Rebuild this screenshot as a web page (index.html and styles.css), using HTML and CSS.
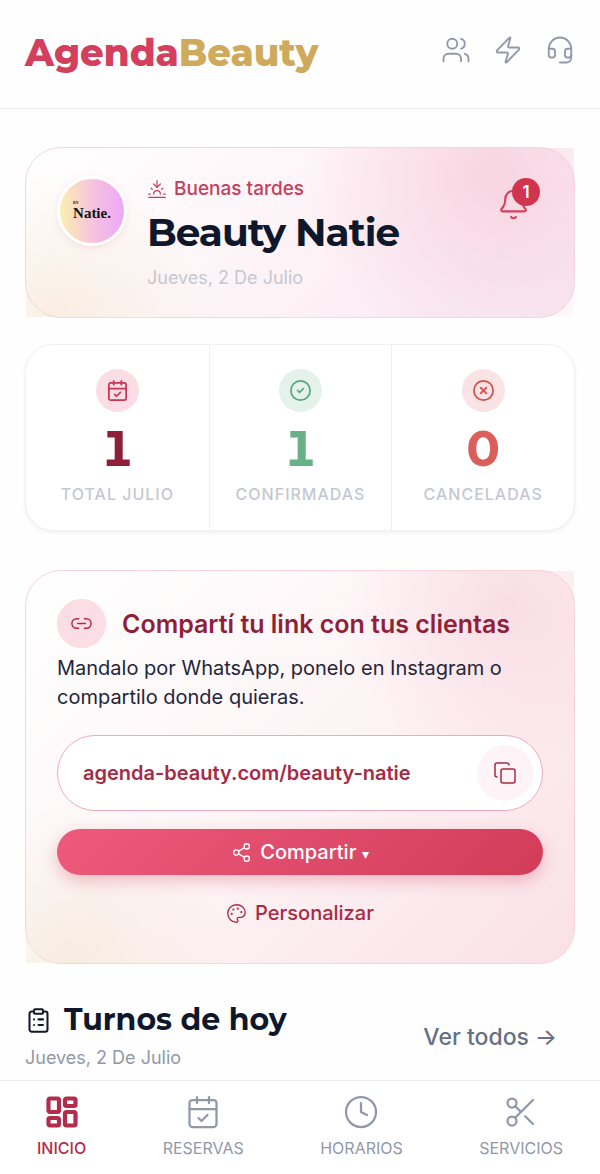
FILE: index.html
```html
<!DOCTYPE html>
<html lang="es">
<head>
    <meta charset="UTF-8">
    <meta name="viewport" content="width=device-width, initial-scale=1.0">
    <title>Inicio - AgendaBeauty</title>
    <link rel="stylesheet" href="styles.css">
</head>
<body>
    <header class="topbar">
        <a class="brand" href="#">Agenda<span>Beauty</span></a>
        <div class="topbar-actions">
            <button type="button" aria-label="Clientas">
                <svg class="icon" viewBox="0 0 24 24"><path d="M16 21v-2a4 4 0 0 0-4-4H6a4 4 0 0 0-4 4v2"/><circle cx="9" cy="7" r="4"/><path d="M22 21v-2a4 4 0 0 0-3-3.87"/><path d="M16 3.13a4 4 0 0 1 0 7.75"/></svg>
            </button>
            <button type="button" aria-label="Novedades">
                <svg class="icon" viewBox="0 0 24 24"><path d="M4 14a1 1 0 0 1-.78-1.63l9.9-10.2a.5.5 0 0 1 .86.46l-1.92 6.02A1 1 0 0 0 13 10h7a1 1 0 0 1 .78 1.63l-9.9 10.2a.5.5 0 0 1-.86-.46l1.92-6.02A1 1 0 0 0 11 14z"/></svg>
            </button>
            <button type="button" aria-label="Soporte">
                <svg class="icon" viewBox="0 0 24 24"><path d="M3 11h3a2 2 0 0 1 2 2v3a2 2 0 0 1-2 2H5a2 2 0 0 1-2-2v-5Zm0 0a9 9 0 1 1 18 0m0 0v5a2 2 0 0 1-2 2h-1a2 2 0 0 1-2-2v-3a2 2 0 0 1 2-2h3Z"/><path d="M21 16v2a4 4 0 0 1-4 4h-5"/></svg>
            </button>
        </div>
    </header>

    <main>
        <section class="card hero">
            <div class="avatar"><small>BY</small><span>Natie.</span></div>
            <div class="hero-text">
                <p class="greeting">
                    <svg class="icon" viewBox="0 0 24 24"><path d="M12 10V2"/><path d="m4.93 10.93 1.41 1.41"/><path d="M2 18h2"/><path d="M20 18h2"/><path d="m19.07 10.93-1.41 1.41"/><path d="M22 22H2"/><path d="m16 6-4 4-4-4"/><path d="M16 18a4 4 0 0 0-8 0"/></svg>
                    Buenas tardes
                </p>
                <h1>Beauty Natie</h1>
                <p class="date">Jueves, 2 De Julio</p>
            </div>
            <button class="bell" type="button" aria-label="Notificaciones">
                <svg class="icon" viewBox="0 0 24 24"><path d="M10.268 21a2 2 0 0 0 3.464 0"/><path d="M3.262 15.326A1 1 0 0 0 4 17h16a1 1 0 0 0 .74-1.673C19.41 13.956 18 12.499 18 8A6 6 0 0 0 6 8c0 4.499-1.411 5.956-2.738 7.326"/></svg>
                <span class="badge">1</span>
            </button>
        </section>

        <section class="stats">
            <div class="stat total">
                <div class="stat-icon">
                    <svg class="icon" viewBox="0 0 24 24"><path d="M8 2v4"/><path d="M16 2v4"/><rect width="18" height="18" x="3" y="4" rx="2"/><path d="M3 10h18"/><path d="m9 16 2 2 4-4"/></svg>
                </div>
                <strong>1</strong>
                <span>Total Julio</span>
            </div>
            <div class="stat confirmed">
                <div class="stat-icon">
                    <svg class="icon" viewBox="0 0 24 24"><circle cx="12" cy="12" r="10"/><path d="m9 12 2 2 4-4"/></svg>
                </div>
                <strong>1</strong>
                <span>Confirmadas</span>
            </div>
            <div class="stat canceled">
                <div class="stat-icon">
                    <svg class="icon" viewBox="0 0 24 24"><circle cx="12" cy="12" r="10"/><path d="m15 9-6 6"/><path d="m9 9 6 6"/></svg>
                </div>
                <strong>0</strong>
                <span>Canceladas</span>
            </div>
        </section>

        <section class="card share">
            <div class="share-title">
                <div class="link-icon">
                    <svg class="icon" viewBox="0 0 24 24"><path d="M9 17H7A5 5 0 0 1 7 7h2"/><path d="M15 7h2a5 5 0 1 1 0 10h-2"/><path d="M8 12h8"/></svg>
                </div>
                <h2>Compartí tu link con tus clientas</h2>
            </div>
            <p class="share-text">Mandalo por WhatsApp, ponelo en Instagram o compartilo donde quieras.</p>
            <div class="link-box">
                <a href="#">agenda-beauty.com/beauty-natie</a>
                <button type="button" aria-label="Copiar link">
                    <svg class="icon" viewBox="0 0 24 24"><rect width="14" height="14" x="8" y="8" rx="2"/><path d="M4 16c-1.1 0-2-.9-2-2V4c0-1.1.9-2 2-2h10c1.1 0 2 .9 2 2"/></svg>
                </button>
            </div>
            <button class="btn-share" type="button">
                <svg class="icon" viewBox="0 0 24 24"><circle cx="18" cy="5" r="3"/><circle cx="6" cy="12" r="3"/><circle cx="18" cy="19" r="3"/><path d="m8.59 13.51 6.83 3.98"/><path d="m15.41 6.51-6.82 3.98"/></svg>
                <span>Compartir <small>▾</small></span>
            </button>
            <button class="btn-custom" type="button">
                <svg class="icon" viewBox="0 0 24 24"><circle cx="13.5" cy="6.5" r=".5"/><circle cx="17.5" cy="10.5" r=".5"/><circle cx="8.5" cy="7.5" r=".5"/><circle cx="6.5" cy="12.5" r=".5"/><path d="M12 2C6.5 2 2 6.5 2 12s4.5 10 10 10c.926 0 1.648-.746 1.648-1.688 0-.437-.18-.835-.437-1.125-.29-.289-.438-.652-.438-1.125a1.64 1.64 0 0 1 1.668-1.668h1.996c3.051 0 5.555-2.503 5.555-5.554C21.965 6.012 17.461 2 12 2z"/></svg>
                Personalizar
            </button>
        </section>

        <section class="today">
            <div>
                <h2>
                    <svg class="icon" viewBox="0 0 24 24"><rect width="8" height="4" x="8" y="2" rx="1"/><path d="M16 4h2a2 2 0 0 1 2 2v14a2 2 0 0 1-2 2H6a2 2 0 0 1-2-2V6a2 2 0 0 1 2-2h2"/><path d="M12 11h4"/><path d="M12 16h4"/><path d="M8 11h.01"/><path d="M8 16h.01"/></svg>
                    Turnos de hoy
                </h2>
                <p>Jueves, 2 De Julio</p>
            </div>
            <a href="#">Ver todos →</a>
        </section>
    </main>

    <nav class="bottom-nav">
        <a class="active" href="#">
            <svg class="icon" viewBox="0 0 24 24"><rect width="7" height="9" x="3" y="3" rx="1"/><rect width="7" height="5" x="14" y="3" rx="1"/><rect width="7" height="9" x="14" y="12" rx="1"/><rect width="7" height="5" x="3" y="16" rx="1"/></svg>
            Inicio
        </a>
        <a href="#">
            <svg class="icon" viewBox="0 0 24 24"><path d="M8 2v4"/><path d="M16 2v4"/><rect width="18" height="18" x="3" y="4" rx="2"/><path d="M3 10h18"/><path d="m9 16 2 2 4-4"/></svg>
            Reservas
        </a>
        <a href="#">
            <svg class="icon" viewBox="0 0 24 24"><circle cx="12" cy="12" r="10"/><path d="M12 6v6l4 2"/></svg>
            Horarios
        </a>
        <a href="#">
            <svg class="icon" viewBox="0 0 24 24"><circle cx="6" cy="6" r="3"/><path d="M8.12 8.12 12 12"/><path d="M20 4 8.12 15.88"/><circle cx="6" cy="18" r="3"/><path d="M14.8 14.8 20 20"/></svg>
            Servicios
        </a>
    </nav>
</body>
</html>
```

FILE: styles.css
```css
* {
    box-sizing: border-box;
    margin: 0;
    padding: 0;
}
body {
    min-height: 100vh;
    display: flex;
    flex-direction: column;
    background: #fefefe;
    color: #0f172a;
    font-family: Inter, "Liberation Sans", sans-serif;
    font-size: 20px;
}
button {
    background: none;
    border: none;
    font: inherit;
    color: inherit;
    cursor: pointer;
}
a {
    color: inherit;
    text-decoration: none;
}
.icon {
    display: block;
    flex-shrink: 0;
    width: 20px;
    height: 20px;
    fill: none;
    stroke: currentColor;
    stroke-width: 1.5;
    stroke-linecap: round;
    stroke-linejoin: round;
}

/* Header */
.topbar {
    display: flex;
    align-items: center;
    justify-content: space-between;
    height: 109px;
    padding: 0 25px 8px;
    border-bottom: 1px solid #eeeef0;
}
.brand {
    font-family: Montserrat, Inter, sans-serif;
    font-size: 37px;
    font-weight: 800;
    line-height: 40px;
    padding-top: 6px;
    color: #d43f5e;
}
.brand span {
    color: #cfaa5c;
}
.topbar-actions {
    display: flex;
    gap: 22px;
    color: #9198a8;
}
.topbar-actions .icon {
    width: 30px;
    height: 30px;
}

main {
    padding: 38px 25px 8px;
}
.card {
    position: relative;
    border: 1px solid #f9d3dd;
    border-radius: 36px;
}
/* square glow layer behind the card content */
.card::before {
    content: "";
    position: absolute;
    inset: 0;
}
.card > * {
    position: relative;
}

/* Greeting */
.hero {
    display: flex;
    align-items: flex-start;
    gap: 20px;
    padding: 28px 31px 27px;
    background: linear-gradient(135deg, #fff 0%, #fdf2f6 55%, #f7e8f3 100%);
}
.hero::before {
    background:
        radial-gradient(circle at 85% 15%, rgba(244, 180, 200, 0.45), transparent 190px),
        radial-gradient(circle at 5% 100%, rgba(240, 222, 190, 0.4), transparent 150px);
}
.avatar {
    display: flex;
    flex-direction: column;
    align-items: center;
    justify-content: center;
    width: 70px;
    height: 70px;
    border: 3px solid #fff;
    border-radius: 50%;
    background: linear-gradient(90deg, #fbf0b0, #f6c4dc 50%, #eda6fa);
    box-shadow: 0 2px 6px rgba(190, 80, 110, 0.12);
    font-family: "Liberation Serif", serif;
    font-size: 15px;
    font-weight: bold;
    line-height: 16px;
    color: #111;
}
.avatar small {
    align-self: flex-start;
    margin-left: 13px;
    font-size: 4px;
    line-height: 4px;
}
.hero-text {
    flex: 1;
}
.greeting {
    display: flex;
    align-items: center;
    gap: 7px;
    font-size: 19px;
    font-weight: 500;
    line-height: 26px;
    color: #c73e5c;
}
h1 {
    font-family: Montserrat, Inter, sans-serif;
    font-size: 39px;
    font-weight: 700;
    line-height: 44px;
    margin: 8px 0 12px;
    letter-spacing: -1px;
}
.date {
    font-size: 18px;
    line-height: 24px;
    color: #c5c8d0;
}
.bell {
    color: #d4405e;
    padding: 12px 13px 0 0;
}
.bell .icon {
    width: 33px;
    height: 33px;
}
.badge {
    position: absolute;
    top: 2px;
    right: 3px;
    width: 28px;
    height: 28px;
    border-radius: 50%;
    background: #d1344f;
    color: #fff;
    font-size: 17px;
    font-weight: 600;
    line-height: 28px;
}

/* Stats */
.stats {
    display: grid;
    grid-template-columns: repeat(3, 1fr);
    margin: 26px 0 39px;
    border: 1px solid #f0f0f2;
    border-radius: 28px;
    background: #fff;
    box-shadow: 0 2px 4px rgba(15, 23, 42, 0.05);
}
.stat {
    display: flex;
    flex-direction: column;
    align-items: center;
    padding: 24px 0 26px;
}
.stat + .stat {
    border-left: 1px solid #f0f0f2;
}
.stat-icon {
    display: grid;
    place-items: center;
    width: 43px;
    height: 43px;
    border-radius: 50%;
}
.stat-icon .icon {
    width: 23px;
    height: 23px;
    stroke-width: 1.8;
}
.stat strong {
    margin: 12px 0 10px;
    font-family: Montserrat, Inter, sans-serif;
    font-size: 49px;
    font-weight: 700;
    line-height: 50px;
    font-variant-numeric: tabular-nums;
}
.stat span {
    font-size: 16px;
    font-weight: 500;
    line-height: 20px;
    letter-spacing: 1px;
    text-transform: uppercase;
    color: #c5c8d0;
}
.total .stat-icon {
    background: #fbdde5;
    color: #c73557;
}
.total strong {
    color: #8f1f38;
}
.confirmed .stat-icon {
    background: #e4f2eb;
    color: #5aa67e;
}
.confirmed strong {
    color: #67b088;
}
.canceled .stat-icon {
    background: #fae3e4;
    color: #d5504d;
}
.canceled strong {
    color: #dc5e5a;
}

/* Share link */
.share {
    padding: 28px 31px 27px;
    background: linear-gradient(135deg, #fff 0%, #fdf4f6 50%, #fae0e7 100%);
}
.share::before {
    background:
        radial-gradient(circle at 88% 8%, rgba(245, 190, 206, 0.4), transparent 170px),
        radial-gradient(circle at 8% 100%, rgba(240, 226, 200, 0.45), transparent 160px);
}
.share-title {
    display: flex;
    align-items: center;
    gap: 16px;
    color: #8f1f38;
}
.link-icon {
    display: grid;
    place-items: center;
    width: 49px;
    height: 49px;
    border-radius: 50%;
    background: #fbdde5;
    color: #b02a49;
}
.link-icon .icon {
    width: 23px;
    height: 23px;
}
.share h2 {
    font-size: 25px;
    font-weight: 600;
    line-height: 30px;
}
.share-text {
    margin: 6px 0 23px;
    line-height: 29px;
    color: #23263a;
}
.link-box {
    display: flex;
    align-items: center;
    justify-content: space-between;
    height: 76px;
    padding: 0 9px 0 25px;
    border: 1px solid #f0a9bc;
    border-radius: 38px;
    background: #fff;
    font-weight: 600;
    color: #a82a46;
}
.link-box button {
    display: grid;
    place-items: center;
    width: 56px;
    height: 56px;
    border-radius: 50%;
    background: #fef4f7;
}
.link-box .icon {
    width: 24px;
    height: 24px;
}
.btn-share,
.btn-custom {
    display: flex;
    align-items: center;
    justify-content: center;
    gap: 8px;
    width: 100%;
    height: 46px;
    font-weight: 500;
}
.btn-share {
    margin: 18px 0 15px;
    border-radius: 23px;
    background: linear-gradient(135deg, #ee5a7c, #d13c59);
    box-shadow: 0 6px 16px rgba(212, 63, 94, 0.3);
    color: #fff;
}
.btn-share .icon,
.btn-custom .icon {
    width: 21px;
    height: 21px;
}
.btn-share small {
    font-size: 14px;
    vertical-align: middle;
}
.btn-custom {
    color: #a82a46;
}

/* Today */
.today {
    display: flex;
    align-items: center;
    justify-content: space-between;
    padding: 36px 18px 0 0;
}
.today h2 {
    display: flex;
    align-items: center;
    gap: 12px;
    font-family: Montserrat, Inter, sans-serif;
    font-size: 30px;
    font-weight: 700;
    line-height: 40px;
}
.today h2 .icon {
    width: 27px;
    height: 27px;
    stroke-width: 1.8;
}
.today p {
    margin-top: 6px;
    font-size: 18px;
    line-height: 24px;
    color: #9198a8;
}
.today a {
    font-size: 23px;
    font-weight: 500;
    padding-top: 4px;
    color: #667085;
}

/* Bottom navigation */
.bottom-nav {
    position: sticky;
    bottom: 0;
    z-index: 1;
    display: flex;
    justify-content: space-between;
    height: 94px;
    margin-top: auto;
    padding: 13px 37px 0;
    border-top: 1px solid #ededf0;
    background: #fff;
}
.bottom-nav a {
    display: flex;
    flex-direction: column;
    align-items: center;
    gap: 8px;
    font-size: 16px;
    line-height: 20px;
    text-transform: uppercase;
    color: #9198a8;
}
.bottom-nav .icon {
    width: 36px;
    height: 36px;
}
.bottom-nav .active {
    font-weight: 500;
    color: #b32c49;
}
.bottom-nav .active .icon {
    stroke-width: 2.8;
}
```
